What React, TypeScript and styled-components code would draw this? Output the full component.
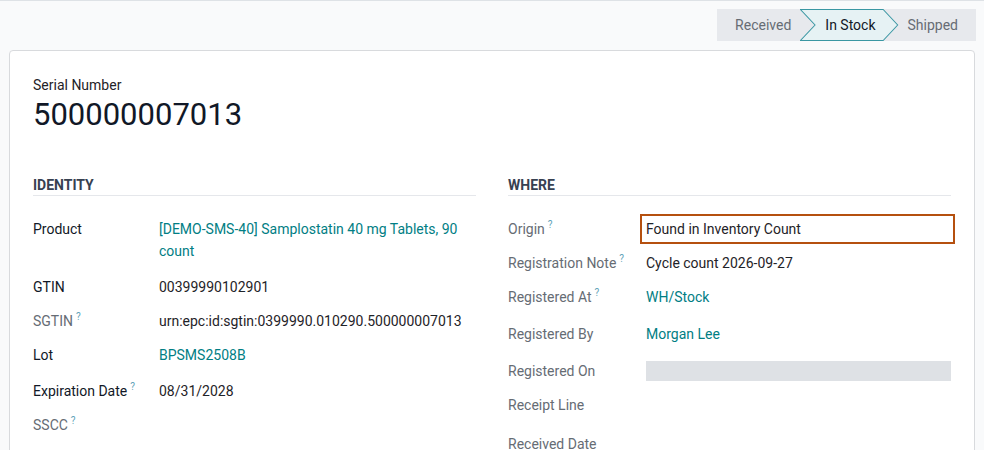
import React from 'react';
import styled, { createGlobalStyle } from 'styled-components';

const palette = {
  bg: '#f9fafb',
  border: '#d8dadd',
  line: '#e5e7eb',
  text: '#1f2328',
  muted: '#666c74',
  link: '#017e84',
  help: '#5fa3b8',
  statusBg: '#e7e9ed',
  highlight: '#b5500f',
  placeholder: '#dee1e5',
};

const GlobalStyle = createGlobalStyle`
  html, body {
    margin: 0;
    padding: 0;
    background: ${palette.bg};
    font-family: Roboto, "Noto Sans", "Liberation Sans", sans-serif;
    font-size: 14px;
    color: ${palette.text};
  }
  * { box-sizing: border-box; }
`;

const Page = styled.div`
  border-top: 1px solid #dee2e6;
  height: 450px;
  overflow: hidden;
`;

const ControlPanel = styled.div`
  display: flex;
  justify-content: flex-end;
  padding: 8px 8px 9px;
`;

const StatusBar = styled.div`
  display: flex;
  align-items: stretch;
  height: 32px;
  background: ${palette.statusBg};
`;

const StatusItem = styled.div<{ $active?: boolean; $pad: string }>`
  position: relative;
  display: flex;
  align-items: center;
  padding: ${(p) => p.$pad};
  color: ${(p) => (p.$active ? '#111827' : palette.muted)};
  font-size: 14px;
  white-space: nowrap;
  span {
    position: relative;
  }
`;

const Chevron = styled.svg`
  position: absolute;
  inset: 0;
  width: 100%;
  height: 100%;
`;

const Sheet = styled.div`
  margin: 0 9px;
  background: #fff;
  border: 1px solid ${palette.border};
  border-radius: 4px;
  padding: 24px 23px 40px;
`;

const TitleLabel = styled.div`
  font-size: 14px;
  line-height: 21px;
`;

const Title = styled.h1`
  margin: 0 0 41px;
  font-size: 31px;
  font-weight: 400;
  line-height: 38px;
  color: #111827;
`;

const Columns = styled.div`
  display: grid;
  grid-template-columns: 1fr 1fr;
  column-gap: 32px;
`;

const Group = styled.div`
  display: flex;
  flex-direction: column;
`;

const GroupTitle = styled.div`
  font-size: 14px;
  font-weight: 700;
  line-height: 20px;
  text-transform: uppercase;
  color: #374151;
  border-bottom: 1px solid ${palette.line};
  margin-bottom: 16px;
`;

const Row = styled.div<{ $labelWidth: number; $extra?: number }>`
  display: grid;
  grid-template-columns: ${(p) => p.$labelWidth}px 1fr;
  padding: 6px 0 ${(p) => 6 + (p.$extra || 0)}px;
  line-height: 22px;
`;

const Label = styled.div<{ $muted?: boolean }>`
  color: ${(p) => (p.$muted ? palette.muted : '#111827')};
  sup {
    color: ${palette.help};
    font-size: 10px;
    margin-left: 3px;
    vertical-align: 6px;
    line-height: 0;
  }
`;

const Value = styled.div`
  color: ${palette.text};
`;

const Link = styled.a`
  color: ${palette.link};
  text-decoration: none;
`;

const Highlighted = styled.div`
  position: relative;
  &::after {
    content: '';
    position: absolute;
    top: -4px;
    bottom: -4px;
    left: -6px;
    right: -4px;
    border: 2px solid ${palette.highlight};
  }
`;

const Placeholder = styled.div`
  height: 20px;
  margin-top: 1px;
  background: ${palette.placeholder};
`;

type FieldProps = {
  label: string;
  help?: boolean;
  muted?: boolean;
  extra?: number;
  labelWidth: number;
  children?: React.ReactNode;
};

const Field: React.FC<FieldProps> = ({ label, help, muted, extra, labelWidth, children }) => (
  <Row $labelWidth={labelWidth} $extra={extra}>
    <Label $muted={muted}>
      {label}
      {help && <sup>?</sup>}
    </Label>
    <Value>{children}</Value>
  </Row>
);

const App: React.FC = () => {
  return (
    <>
      <GlobalStyle />
      <Page>
        <ControlPanel>
          <StatusBar>
            <StatusItem $pad="0 9px 0 18px">
              <span>Received</span>
            </StatusItem>
            <StatusItem $active $pad="0 23px 0 25px">
              <Chevron viewBox="0 0 98 32" preserveAspectRatio="none">
                <polygon
                  points="0.5,0.5 83,0.5 97.5,16 83,31.5 0.5,31.5 15,16"
                  fill="#e6f2f4"
                  stroke="#3a97a3"
                  strokeWidth="1"
                />
              </Chevron>
              <span>In Stock</span>
            </StatusItem>
            <StatusItem $pad="0 18px 0 9px">
              <span>Shipped</span>
            </StatusItem>
          </StatusBar>
        </ControlPanel>

        <Sheet>
          <TitleLabel>Serial Number</TitleLabel>
          <Title>500000007013</Title>

          <Columns>
            <Group>
              <GroupTitle>Identity</GroupTitle>
              <Field label="Product" labelWidth={126} extra={2}>
                <Link>[DEMO-SMS-40] Samplostatin 40 mg Tablets, 90 count</Link>
              </Field>
              <Field label="GTIN" labelWidth={126}>
                00399990102901
              </Field>
              <Field label="SGTIN" help muted labelWidth={126}>
                urn:epc:id:sgtin:0399990.010290.500000007013
              </Field>
              <Field label="Lot" labelWidth={126} extra={2}>
                <Link>BPSMS2508B</Link>
              </Field>
              <Field label="Expiration Date" help labelWidth={126}>
                08/31/2028
              </Field>
              <Field label="SSCC" help muted labelWidth={126} />
            </Group>

            <Group>
              <GroupTitle>Where</GroupTitle>
              <Field label="Origin" help muted labelWidth={138}>
                <Highlighted>Found in Inventory Count</Highlighted>
              </Field>
              <Field label="Registration Note" help muted labelWidth={138}>
                Cycle count 2026-09-27
              </Field>
              <Field label="Registered At" help muted labelWidth={138} extra={3}>
                <Link>WH/Stock</Link>
              </Field>
              <Field label="Registered By" muted labelWidth={138} extra={3}>
                <Link>Morgan Lee</Link>
              </Field>
              <Field label="Registered On" muted labelWidth={138}>
                <Placeholder />
              </Field>
              <Field label="Receipt Line" muted labelWidth={138} extra={5} />
              <Field label="Received Date" muted labelWidth={138} />
            </Group>
          </Columns>
        </Sheet>
      </Page>
    </>
  );
};

export default App;
